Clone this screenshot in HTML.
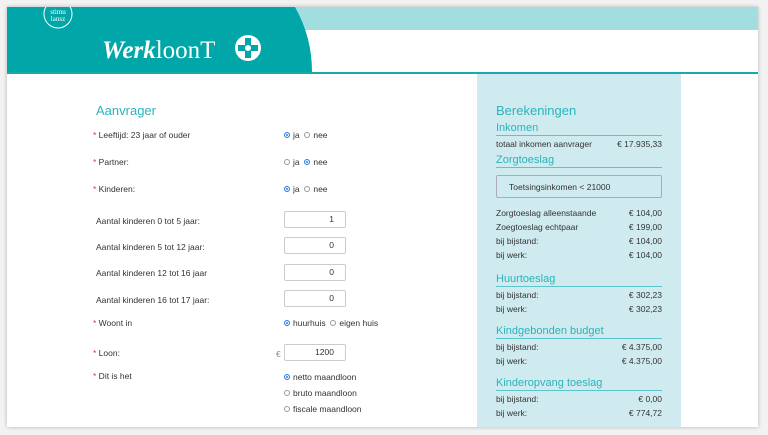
<!DOCTYPE html><html><head><style>
body{margin:0;width:768px;height:435px;background:#f2f2f2;font-family:"Liberation Sans",sans-serif;position:relative;overflow:hidden;color:#333}
.a{position:absolute}
.page{left:7px;top:7px;width:751px;height:420px;background:#fff;box-shadow:0 0 4px rgba(0,0,0,.25)}
.l{font-size:8.5px;color:#333;white-space:nowrap}
.s{color:#e33}
.r{display:inline-block;width:6px;height:6px;border:1px solid #999;border-radius:50%;vertical-align:0px;margin-right:3px;box-sizing:border-box}
.r.on{border:1.5px solid #2b7de9;background:#2b7de9;box-shadow:inset 0 0 0 1px #fff}
.in{width:62px;height:17px;border:1px solid #ccc;border-radius:2px;box-sizing:border-box;text-align:right;padding-right:11px;font-size:8.5px;line-height:15px}
.h{font-size:11px;color:#2ab3bc;width:166px;border-bottom:1.5px solid #5cc5cc;padding-bottom:1px}
.v{right:0}
</style></head><body>
<div class="a page"></div>
<div class="a" style="left:7px;top:7px;width:751px;height:23px;background:#a2dee0"></div>
<svg class="a" style="left:7px;top:7px" width="751" height="68">
<path d="M0 0H288Q305 30 305 65H0Z" fill="#00a6a8"/>
<rect x="0" y="65" width="751" height="2" fill="#1aa9ab"/>
<circle cx="51" cy="7" r="14" fill="none" stroke="#fff" stroke-width="1"/>
<text x="51" y="7" fill="#fff" font-size="7" text-anchor="middle" font-family="Liberation Serif">stimu</text>
<text x="51" y="14" fill="#fff" font-size="7" text-anchor="middle" font-family="Liberation Serif">lansz</text>
<text x="95" y="51" fill="#fff" font-size="25" font-family="Liberation Serif"><tspan font-style="italic" font-weight="bold">Werk</tspan>loonT</text>
<circle cx="241" cy="41" r="13" fill="#fff"/>
<path d="M238 31h6v7h7v6h-7v7h-6v-7h-7v-6h7z" fill="#00a6a8"/>
<circle cx="241" cy="41" r="3" fill="#fff"/>
</svg>
<div class="a" style="left:477px;top:74px;width:204px;height:353px;background:#cfebef"></div>

<div class="a" style="left:96px;top:103px;font-size:13px;color:#2ab3bc">Aanvrager</div>
<div class="a l" style="left:93px;top:130px"><span class="s">*</span> Leeftijd: 23 jaar of ouder</div>
<div class="a l" style="left:284px;top:130px"><span class="r on"></span>ja &nbsp;<span class="r"></span>nee</div>
<div class="a l" style="left:93px;top:157px"><span class="s">*</span> Partner:</div>
<div class="a l" style="left:284px;top:157px"><span class="r"></span>ja &nbsp;<span class="r on"></span>nee</div>
<div class="a l" style="left:93px;top:184px"><span class="s">*</span> Kinderen:</div>
<div class="a l" style="left:284px;top:184px"><span class="r on"></span>ja &nbsp;<span class="r"></span>nee</div>
<div class="a l" style="left:96px;top:216px">Aantal kinderen 0 tot 5 jaar:</div>
<div class="a in" style="left:284px;top:211px">1</div>
<div class="a l" style="left:96px;top:242px">Aantal kinderen 5 tot 12 jaar:</div>
<div class="a in" style="left:284px;top:237px">0</div>
<div class="a l" style="left:96px;top:268px">Aantal kinderen 12 tot 16 jaar</div>
<div class="a in" style="left:284px;top:264px">0</div>
<div class="a l" style="left:96px;top:295px">Aantal kinderen 16 tot 17 jaar:</div>
<div class="a in" style="left:284px;top:290px">0</div>
<div class="a l" style="left:93px;top:318px"><span class="s">*</span> Woont in</div>
<div class="a l" style="left:284px;top:318px"><span class="r on"></span>huurhuis &nbsp;<span class="r"></span>eigen huis</div>
<div class="a l" style="left:93px;top:348px"><span class="s">*</span> Loon:</div>
<div class="a l" style="left:276px;top:349px;color:#888">€</div>
<div class="a in" style="left:284px;top:344px">1200</div>
<div class="a l" style="left:93px;top:371px"><span class="s">*</span> Dit is het</div>
<div class="a l" style="left:284px;top:372px"><span class="r on"></span>netto maandloon</div>
<div class="a l" style="left:284px;top:388px"><span class="r"></span>bruto maandloon</div>
<div class="a l" style="left:284px;top:404px"><span class="r"></span>fiscale maandloon</div>

<div class="a" style="left:496px;top:103px;font-size:13px;color:#2ab3bc">Berekeningen</div>
<div class="a" style="left:496px;top:122px;width:166px">
<div class="h">Inkomen</div>
<div style="position:relative;height:14px" class="l"><span class="a" style="top:3px">totaal inkomen aanvrager</span><span class="a v" style="top:3px">€ 17.935,33</span></div>
</div>
<div class="a h" style="left:496px;top:154px">Zorgtoeslag</div>
<div class="a l" style="left:496px;top:175px;height:23px;border:1px solid #aab;border-radius:2px;line-height:23px;padding-left:12px;box-sizing:border-box;width:166px">Toetsingsinkomen &lt; 21000</div>
<div class="a" style="left:496px;top:208px;width:166px">
<div style="position:relative;height:14px" class="l"><span class="a">Zorgtoeslag alleenstaande</span><span class="a v">€ 104,00</span></div>
<div style="position:relative;height:14px" class="l"><span class="a">Zoegtoeslag echtpaar</span><span class="a v">€ 199,00</span></div>
<div style="position:relative;height:14px" class="l"><span class="a">bij bijstand:</span><span class="a v">€ 104,00</span></div>
<div style="position:relative;height:14px" class="l"><span class="a">bij werk:</span><span class="a v">€ 104,00</span></div>
</div>
<div class="a" style="left:496px;top:273px;width:166px">
<div class="h">Huurtoeslag</div>
<div style="position:relative;height:14px;margin-top:3px" class="l"><span class="a">bij bijstand:</span><span class="a v">€ 302,23</span></div>
<div style="position:relative;height:14px" class="l"><span class="a">bij werk:</span><span class="a v">€ 302,23</span></div>
</div>
<div class="a" style="left:496px;top:325px;width:166px">
<div class="h">Kindgebonden budget</div>
<div style="position:relative;height:14px;margin-top:3px" class="l"><span class="a">bij bijstand:</span><span class="a v">€ 4.375,00</span></div>
<div style="position:relative;height:14px" class="l"><span class="a">bij werk:</span><span class="a v">€ 4.375,00</span></div>
</div>
<div class="a" style="left:496px;top:377px;width:166px">
<div class="h">Kinderopvang toeslag</div>
<div style="position:relative;height:14px;margin-top:3px" class="l"><span class="a">bij bijstand:</span><span class="a v">€ 0,00</span></div>
<div style="position:relative;height:14px" class="l"><span class="a">bij werk:</span><span class="a v">€ 774,72</span></div>
</div>
</body></html>
